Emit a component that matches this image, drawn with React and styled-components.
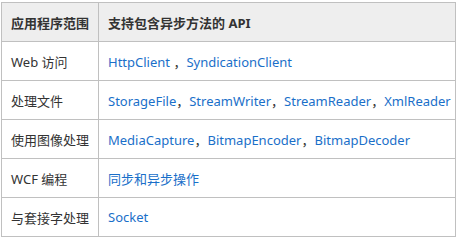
import React from 'react';
import styled, { createGlobalStyle } from 'styled-components';

const GlobalStyle = createGlobalStyle`
  body {
    margin: 0;
    background: #fff;
    font-family: "Noto Sans", "Noto Sans CJK SC", sans-serif;
  }
`;

const Table = styled.table`
  margin: 2px 0 0 1px;
  width: 454px;
  table-layout: fixed;
  border-collapse: collapse;
  font-size: 13px;
  color: #333;
`;

const Col = styled.col`
  width: ${(p) => p.$width};
`;

const HeadCell = styled.th`
  height: 38px;
  padding: 0 9px;
  text-align: left;
  font-weight: bold;
  background: #eeeeee;
  border: 1px solid #c0c0c0;
  white-space: nowrap;
`;

const Cell = styled.td`
  height: 38px;
  padding: 0 9px;
  border: 1px solid #c0c0c0;
  white-space: nowrap;
`;

const Link = styled.a`
  color: #1a6fc9;
  text-decoration: none;
`;

const rows = [
  { area: 'Web 访问', apis: ['HttpClient ', 'SyndicationClient'] },
  { area: '处理文件', apis: ['StorageFile', 'StreamWriter', 'StreamReader', 'XmlReader'] },
  { area: '使用图像处理', apis: ['MediaCapture', 'BitmapEncoder', 'BitmapDecoder'] },
  { area: 'WCF 编程', apis: ['同步和异步操作'] },
  { area: '与套接字处理', apis: ['Socket'] },
];

export default function App() {
  return (
    <>
      <GlobalStyle />
      <Table>
        <colgroup>
          <Col $width="97px" />
          <Col $width="357px" />
        </colgroup>
        <thead>
          <tr>
            <HeadCell>应用程序范围</HeadCell>
            <HeadCell>支持包含异步方法的 API</HeadCell>
          </tr>
        </thead>
        <tbody>
          {rows.map((row) => (
            <tr key={row.area}>
              <Cell>{row.area}</Cell>
              <Cell>
                {row.apis.map((api, i) => (
                  <React.Fragment key={api}>
                    {i > 0 && '，'}
                    <Link href="#">{api}</Link>
                  </React.Fragment>
                ))}
              </Cell>
            </tr>
          ))}
        </tbody>
      </Table>
    </>
  );
}
